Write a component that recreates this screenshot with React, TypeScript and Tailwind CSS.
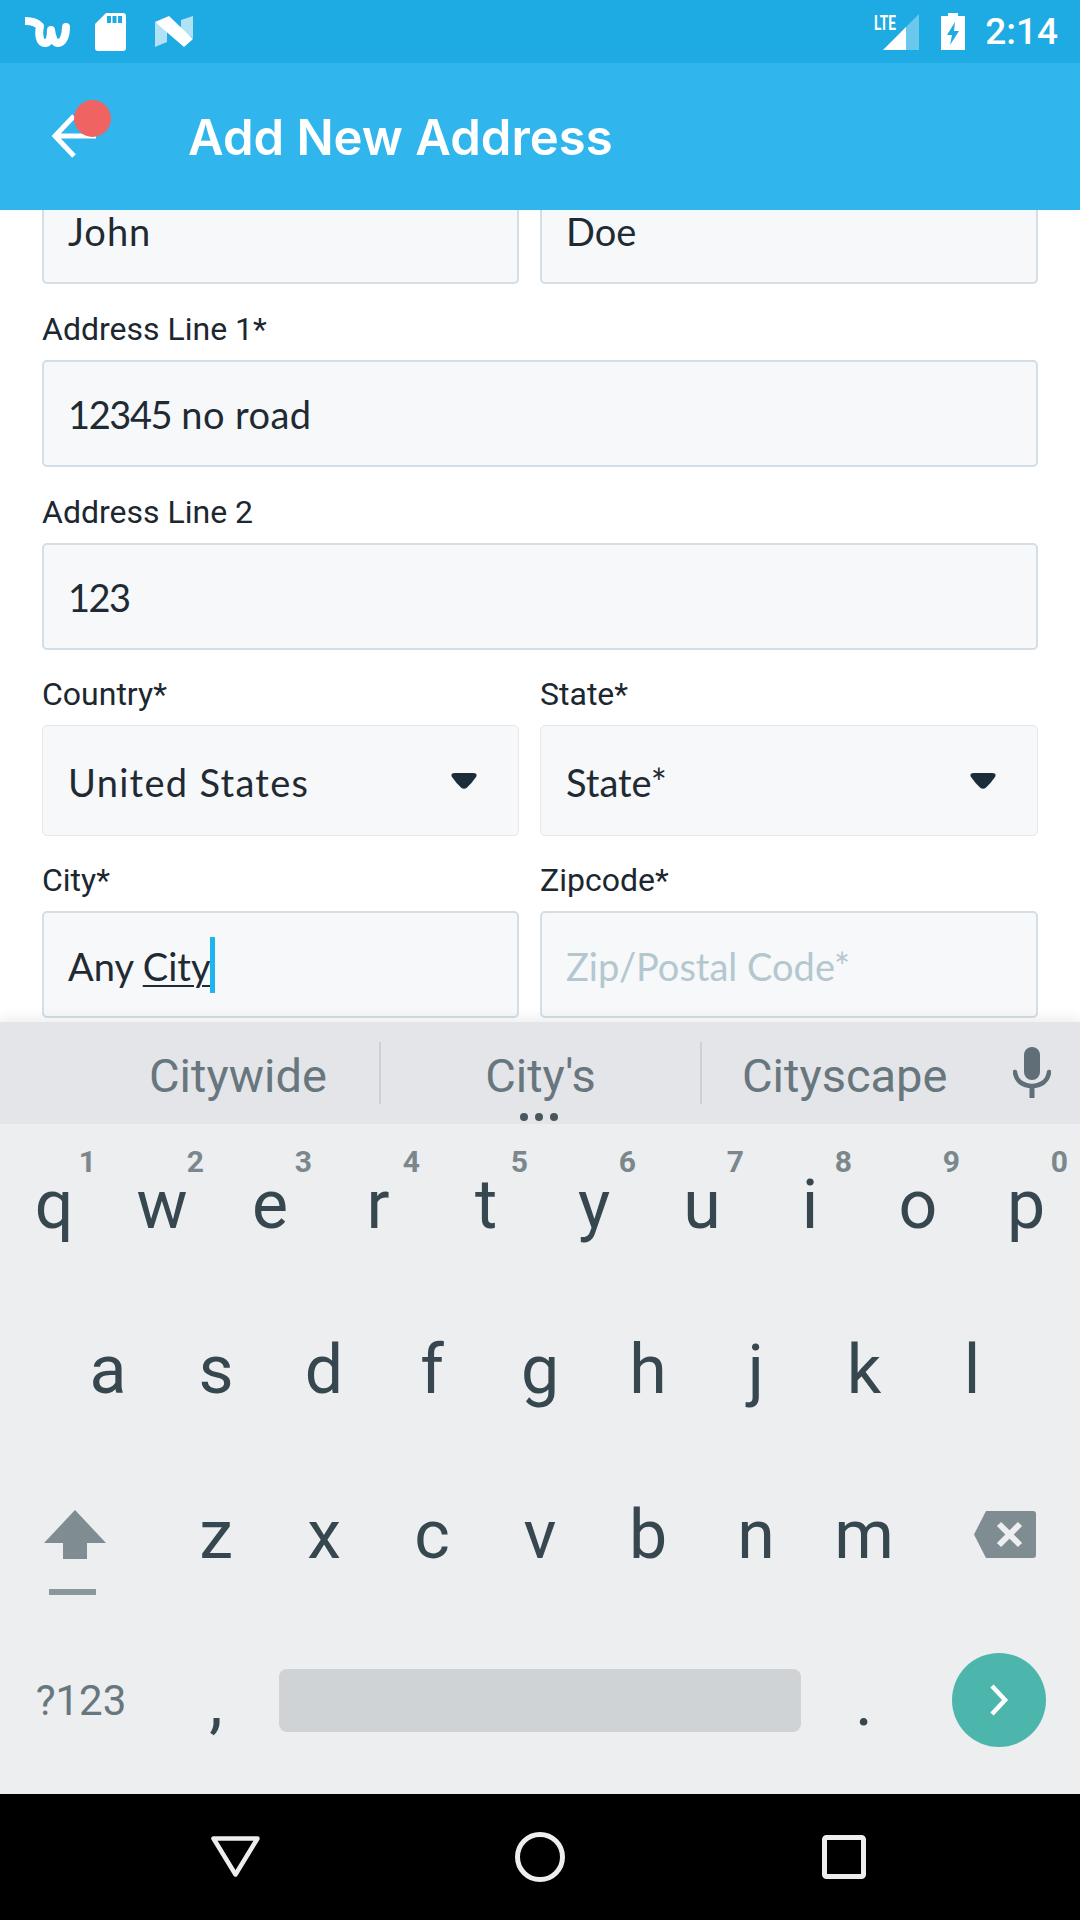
import React from 'react';

const row1 = [
  ['q', '1'], ['w', '2'], ['e', '3'], ['r', '4'], ['t', '5'],
  ['y', '6'], ['u', '7'], ['i', '8'], ['o', '9'], ['p', '0'],
];
const row2 = ['a', 's', 'd', 'f', 'g', 'h', 'j', 'k', 'l'];
const row3 = ['z', 'x', 'c', 'v', 'b', 'n', 'm'];

const fieldText = "font-['Lato',sans-serif] text-[38px] text-[#1f2a33]";

const Label = ({ children }: { children: React.ReactNode }) => (
  <div className="font-['Roboto',sans-serif] text-[32px] leading-[36px] text-[#1c2730] mb-[13px]">{children}</div>
);

const Caret = () => (
  <svg width="26" height="16" viewBox="0 0 26 16" className="shrink-0">
    <path d="M4 0 H22 Q27 0 25 4 Q21 10 15.5 15 Q13 16.5 10.5 15 Q5 10 1 4 Q-1 0 4 0 Z" fill="#1b2c3a" />
  </svg>
);

const Field = ({ className, children }: { className: string; children: React.ReactNode }) => (
  <div className={`flex items-center bg-[#f6f8fa] border-2 border-[#d3dee6] rounded-[5px] pl-[24px] ${className}`}>
    {children}
  </div>
);

const Select = ({ value, valueClass }: { value: string; valueClass?: string }) => (
  <div className="flex items-center justify-between h-[111px] bg-[#f6f8fa] border border-[#e3e8ec] rounded-[5px] pl-[25px] pr-[41px]">
    <span className={`${fieldText} pt-[3px] ${valueClass ?? ''}`}>{value}</span>
    <Caret />
  </div>
);

const Key = ({ letter, hint }: { letter: string; hint?: string }) => (
  <div className="relative flex justify-center w-[108px] h-full">
    {hint && (
      <span className="absolute top-[20px] right-[12px] font-['Roboto',sans-serif] font-bold text-[30px] leading-[36px] text-[#7b878c]">{hint}</span>
    )}
    <span className="mt-[36px] font-['Roboto',sans-serif] text-[68px] leading-[90px] text-[#37474f]">{letter}</span>
  </div>
);

export default function App() {
  return (
    <div className="relative flex flex-col w-[1080px] h-[1920px] overflow-hidden bg-white">
      {/* Status bar */}
      <div className="relative z-10 flex items-center justify-between h-[63px] bg-[#1eaae2] pl-[25px] pr-[22px] shrink-0">
        <div className="flex items-center">
          <svg width="46" height="32" viewBox="0 0 46 32" className="mr-[24px]">
            <path d="M1 5 Q10 5 15 10 C13 20 15 27 20 27 C25 27 26 20 26 14 C27 21 29 27 33 27 C38 27 41 20 41 11" fill="none" stroke="#fff" strokeWidth="8" strokeLinejoin="round" strokeLinecap="round" />
          </svg>
          <svg width="31" height="38" viewBox="0 0 31 38" className="mr-[29px]">
            <path d="M11 0 H28 Q31 0 31 3 V35 Q31 38 28 38 H3 Q0 38 0 35 V11 Z" fill="#fff" />
            <path d="M12 3 h4 v7 h-4 Z M17.5 3 h4 v7 h-4 Z M23 3 h4 v7 h-4 Z" fill="#1eaae2" />
          </svg>
          <svg width="38" height="31" viewBox="0 0 38 31">
            <path d="M0 6 V31 L12 26 V15 Z" fill="#fff" opacity="0.65" />
            <path d="M38 0 V22 L26 14 V4 Z" fill="#fff" opacity="0.65" />
            <path d="M0 6 L14 0 L38 23 L29 31 Z" fill="#fff" />
          </svg>
        </div>
        <div className="flex items-center">
          <div className="relative w-[36px] h-[36px] mr-[22px]">
            <span className="absolute -left-[9px] -top-[1px] font-['Roboto',sans-serif] font-bold text-[21px] leading-[20px] text-white scale-x-[0.65] origin-left">LTE</span>
            <svg width="36" height="36" viewBox="0 0 36 36" className="absolute left-0 top-0">
              <path d="M36 0 V36 H23 V13 Z" fill="#fff" opacity="0.35" />
              <path d="M23 13 V36 H0 Z" fill="#fff" />
            </svg>
          </div>
          <svg width="24" height="37" viewBox="0 0 24 37" className="mr-[20px]">
            <path d="M7 0 H17 V3 H24 V37 H0 V3 H7 Z" fill="#fff" />
            <path d="M14 9 L6 22 H11 L9 32 L18 18 H13 Z" fill="#1eaae2" />
          </svg>
          <span className="font-['Roboto',sans-serif] font-medium text-[37px] text-white">2:14</span>
        </div>
      </div>

      {/* App bar */}
      <div className="relative z-10 flex items-center h-[147px] bg-[#30b5ec] shrink-0">
        <div className="relative w-[189px] h-full">
          <svg width="44" height="46" viewBox="0 0 44 46" className="absolute left-[52px] top-[50px]">
            <path d="M44 23 H4 M22 3 L3 23 L22 43" fill="none" stroke="#fff" strokeWidth="5" />
          </svg>
          <div className="absolute left-[74px] top-[37px] w-[37px] h-[37px] rounded-full bg-[#ef6462]" />
        </div>
        <span className="font-['Inter',sans-serif] font-semibold text-[49px] text-white mt-[2px] -ml-[1px]">Add New Address</span>
      </div>

      {/* Form */}
      <div className="flex-1 px-[42px]">
        <div className="flex gap-[21px]">
          <Field className="w-[477px] h-[74px] border-t-0 rounded-t-none items-start">
            <span className={`${fieldText} leading-[46px] -mt-[2px] tracking-[1px]`}>John</span>
          </Field>
          <Field className="w-[498px] h-[74px] border-t-0 rounded-t-none items-start">
            <span className={`${fieldText} leading-[46px] -mt-[2px]`}>Doe</span>
          </Field>
        </div>
        <div className="mt-[27px]">
          <Label>Address Line 1*</Label>
          <Field className="h-[107px] pt-[2px]">
            <span className={`${fieldText} tracking-[0.4px]`}>
              <span className="tracking-[-1.4px]">12345</span> no road
            </span>
          </Field>
        </div>
        <div className="mt-[27px]">
          <Label>Address Line 2</Label>
          <Field className="h-[107px] pt-[2px]"><span className={`${fieldText} tracking-[-1.6px]`}>123</span></Field>
        </div>
        <div className="flex gap-[21px] mt-[26px]">
          <div className="w-[477px]">
            <Label>Country*</Label>
            <Select value="United States" valueClass="tracking-[1.3px]" />
          </div>
          <div className="w-[498px]">
            <Label>State*</Label>
            <Select value="State*" />
          </div>
        </div>
        <div className="flex gap-[21px] mt-[26px]">
          <div className="w-[477px]">
            <Label>City*</Label>
            <Field className="h-[107px] border-[#cfd9e0]">
              <span className={`${fieldText} flex items-center`}>
                <span className="pt-[3px]">Any&nbsp;</span>
                <span className="pt-[3px] underline decoration-2 underline-offset-4">City</span>
                <span className="inline-block w-[5px] h-[56px] bg-[#1eb4ee]" />
              </span>
            </Field>
          </div>
          <div className="w-[498px]">
            <Label>Zipcode*</Label>
            <Field className="h-[107px] pt-[3px] border-[#cfd9e0]"><span className={`${fieldText} !text-[#b4c7cf]`}>Zip/Postal Code*</span></Field>
          </div>
        </div>
      </div>

      {/* Keyboard */}
      <div className="absolute left-0 right-0 top-[1022px] shrink-0 shadow-[0_-6px_10px_rgba(0,0,0,0.06)]">
        <div className="relative flex items-center h-[102px] pt-[6px] bg-[#e3e5e8] font-['Roboto',sans-serif] text-[47px] text-[#68767d]">
          <div className="w-[379px] pl-[149px]">Citywide</div>
          <div className="w-[2px] h-[62px] -mt-[6px] bg-[#cdd1d4]" />
          <div className="w-[319px] text-center">City's</div>
          <div className="w-[2px] h-[62px] -mt-[6px] bg-[#cdd1d4]" />
          <div className="pl-[40px]">Cityscape</div>
          <svg width="38" height="51" viewBox="0 0 38 51" className="absolute left-[1013px] top-[25px]">
            <rect x="11" y="0" width="16" height="33" rx="8" fill="#5f6e77" />
            <path d="M2 25 C3 34 10 39 19 39 C28 39 35 34 36 25" fill="none" stroke="#5f6e77" strokeWidth="4.5" strokeLinecap="round" />
            <rect x="16.5" y="38" width="5" height="13" fill="#5f6e77" />
          </svg>
          <div className="absolute left-[520px] bottom-[3px] flex gap-[7px]">
            <span className="w-[8px] h-[8px] rounded-full bg-[#4a565d]" />
            <span className="w-[8px] h-[8px] rounded-full bg-[#4a565d]" />
            <span className="w-[8px] h-[8px] rounded-full bg-[#4a565d]" />
          </div>
        </div>
        <div className="flex flex-col h-[670px] bg-[#eceef0]">
          <div className="flex h-[165px]">
            {row1.map(([k, h]) => <Key key={k} letter={k} hint={h} />)}
          </div>
          <div className="flex justify-center h-[165px]">
            {row2.map((k) => <Key key={k} letter={k} />)}
          </div>
          <div className="flex h-[165px]">
            <div className="relative w-[162px]">
              <svg width="62" height="49" viewBox="0 0 62 49" className="absolute left-[44px] top-[56px]">
                <path d="M31 0 L62 33 H43 V49 H19 V33 H0 Z" fill="#7f8d93" />
              </svg>
              <div className="absolute left-[49px] top-[135px] w-[47px] h-[6px] bg-[#8a979c]" />
            </div>
            {row3.map((k) => <Key key={k} letter={k} />)}
            <div className="relative w-[162px]">
              <svg width="62" height="47" viewBox="0 0 62 47" className="absolute left-[56px] top-[57px]">
                <path d="M12 0 H59 Q62 0 62 3 V44 Q62 47 59 47 H12 L0 23.5 Z" fill="#7f8d93" />
                <path d="M25 13 L46 34 M46 13 L25 34" stroke="#eceef0" strokeWidth="6" />
              </svg>
            </div>
          </div>
          <div className="flex items-center flex-1 pb-[13px]">
            <div className="w-[162px] text-center font-['Roboto',sans-serif] text-[42px] text-[#68767d]">?123</div>
            <div className="w-[108px] text-center font-['Roboto',sans-serif] text-[68px] leading-[64px] text-[#37474f] mt-[4px]">,</div>
            <div className="w-[522px] ml-[9px] h-[63px] rounded-[8px] bg-[#d0d3d6]" />
            <div className="w-[108px] ml-[9px] text-center font-['Roboto',sans-serif] text-[68px] leading-[64px] text-[#37474f] mt-[4px]">.</div>
            <div className="ml-[34px] flex items-center justify-center w-[94px] h-[94px] rounded-full bg-[#4db6ac]">
              <svg width="22" height="34" viewBox="0 0 22 34">
                <path d="M4 3 L17 17 L4 31" fill="none" stroke="#fff" strokeWidth="4.5" />
              </svg>
            </div>
          </div>
        </div>
        {/* Nav bar */}
        <div className="relative flex h-[126px] bg-black">
          <svg width="49" height="41" viewBox="0 0 49 41" className="absolute left-[211px] top-[42px]">
            <path d="M2.5 2.5 H46.5 L24.5 38.5 Z" fill="none" stroke="#eee" strokeWidth="4.5" strokeLinejoin="round" />
          </svg>
          <svg width="50" height="50" viewBox="0 0 50 50" className="absolute left-[515px] top-[38px]">
            <circle cx="25" cy="25" r="22.5" fill="none" stroke="#eee" strokeWidth="5" />
          </svg>
          <svg width="44" height="44" viewBox="0 0 44 44" className="absolute left-[822px] top-[41px]">
            <rect x="2.5" y="2.5" width="39" height="39" rx="2" fill="none" stroke="#eee" strokeWidth="5" />
          </svg>
        </div>
      </div>
    </div>
  );
}
